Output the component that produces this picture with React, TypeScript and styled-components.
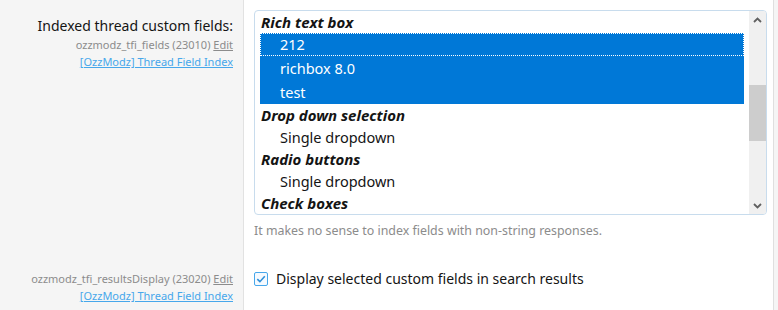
import React from "react";
import styled, { createGlobalStyle } from "styled-components";

const Global = createGlobalStyle`
  html, body { margin: 0; padding: 0; background: #f5f5f5; }
  body { font-family: "Segoe UI", "Noto Sans", sans-serif; color: #141414; }
`;

const Form = styled.div`
  width: 774px;
  border-right: 1px solid #dfdfdf;
  background: #fff;
  box-sizing: border-box;
`;

const Row = styled.div<{ $pt: number; $pb: number }>`
  display: grid;
  grid-template-columns: 244px 1fr;
  & > * { padding-top: ${(p) => p.$pt}px; padding-bottom: ${(p) => p.$pb}px; }
`;

const LabelCol = styled.div<{ $offset: number }>`
  background: #f5f5f5;
  border-right: 1px solid #e2e2e2;
  text-align: right;
  padding-right: 10px;
  padding-top: ${(p) => p.$offset}px !important;
  display: flex;
  flex-direction: column;
  align-items: flex-end;
`;

const MainLabel = styled.div`
  font-size: 14px;
  line-height: 20px;
  color: #141414;
`;

const Meta = styled.div`
  font-size: 11px;
  line-height: 17px;
  color: #8c8c8c;
  white-space: nowrap;
`;

const EditLink = styled.span`
  text-decoration: underline;
  color: #8c8c8c;
`;

const AddonLink = styled.a`
  font-size: 11px;
  line-height: 17px;
  color: #47a7eb;
  text-decoration: underline;
  white-space: nowrap;
`;

const InputCol = styled.div`
  padding-left: 10px;
  padding-right: 6px;
  display: flex;
  flex-direction: column;
`;

const ListBox = styled.div`
  height: 205px;
  border: 1px solid #c8dced;
  border-radius: 4px;
  display: flex;
  background: #fff;
  box-sizing: border-box;
  overflow: hidden;
`;

const Options = styled.div`
  flex: 1;
  padding: 0 5px 0 5px;
  display: flex;
  flex-direction: column;
`;

const Group = styled.div`
  font-size: 15px;
  font-weight: bold;
  font-style: italic;
  height: 22px;
  line-height: 22px;
  padding-left: 1px;
`;

const Option = styled.div<{ $sel?: boolean; $focus?: boolean; $h: number }>`
  font-size: 14.5px;
  height: ${(p) => p.$h}px;
  line-height: ${(p) => p.$h}px;
  padding-left: 20px;
  background: ${(p) => (p.$sel ? "#0078d7" : "transparent")};
  color: ${(p) => (p.$sel ? "#fff" : "#141414")};
  outline: ${(p) => (p.$focus ? "1px dotted #fff" : "none")};
  outline-offset: -1px;
`;

const Scrollbar = styled.div`
  width: 17px;
  background: #f0f0f0;
  display: flex;
  flex-direction: column;
`;

const Arrow = styled.div`
  height: 17px;
  display: flex;
  align-items: center;
  justify-content: center;
`;

const Track = styled.div`
  flex: 1;
  display: flex;
  flex-direction: column;
`;

const Thumb = styled.div<{ $top: number; $h: number }>`
  margin-top: ${(p) => p.$top}px;
  height: ${(p) => p.$h}px;
  background: #cdcdcd;
`;

const Hint = styled.div`
  margin-top: 7px;
  font-size: 12.4px;
  line-height: 17px;
  color: #8c8c8c;
`;

const Spacer = styled.div<{ $h: number }>`
  height: ${(p) => p.$h}px;
`;

const CheckRow = styled.label`
  display: flex;
  align-items: center;
  gap: 8px;
  font-size: 14px;
  line-height: 20px;
  color: #141414;
`;

const Box = styled.span`
  width: 14px;
  height: 14px;
  display: inline-flex;
`;

const Chevron = ({ up }: { up?: boolean }) => (
  <svg width="9" height="6" viewBox="0 0 9 6">
    <path
      d={up ? "M1 5 L4.5 1.5 L8 5" : "M1 1 L4.5 4.5 L8 1"}
      fill="none"
      stroke="#606060"
      strokeWidth="1.8"
    />
  </svg>
);

export default function App() {
  return (
    <>
      <Global />
      <Form>
        <Row $pt={10} $pb={0}>
          <LabelCol $offset={16}>
            <MainLabel>Indexed thread custom fields:</MainLabel>
            <Meta>
              ozzmodz_tfi_fields (23010) <EditLink>Edit</EditLink>
            </Meta>
            <AddonLink>[OzzModz] Thread Field Index</AddonLink>
          </LabelCol>
          <InputCol>
            <ListBox>
              <Options>
                <Group>Rich text box</Group>
                <Option $sel $focus $h={23}>212</Option>
                <Option $sel $h={24}>richbox 8.0</Option>
                <Option $sel $h={24}>test</Option>
                <Group>Drop down selection</Group>
                <Option $h={22}>Single dropdown</Option>
                <Group>Radio buttons</Group>
                <Option $h={22}>Single dropdown</Option>
                <Group>Check boxes</Group>
              </Options>
              <Scrollbar>
                <Arrow><Chevron up /></Arrow>
                <Track>
                  <Thumb $top={57} $h={56} />
                </Track>
                <Arrow><Chevron /></Arrow>
              </Scrollbar>
            </ListBox>
            <Hint>It makes no sense to index fields with non-string responses.</Hint>
          </InputCol>
        </Row>
        <Row $pt={0} $pb={8}>
          <LabelCol $offset={31}>
            <Meta>
              ozzmodz_tfi_resultsDisplay (23020) <EditLink>Edit</EditLink>
            </Meta>
            <AddonLink>[OzzModz] Thread Field Index</AddonLink>
          </LabelCol>
          <InputCol>
            <Spacer $h={30} />
            <CheckRow>
              <Box>
                <svg width="14" height="14" viewBox="0 0 14 14">
                  <rect x="0.5" y="0.5" width="13" height="13" rx="1.5" fill="#f5faff" stroke="#47a7eb" />
                  <path d="M3.3 7.2 L5.9 9.7 L10.8 4.3" fill="none" stroke="#2f8fd8" strokeWidth="1.6" />
                </svg>
              </Box>
              Display selected custom fields in search results
            </CheckRow>
          </InputCol>
        </Row>
      </Form>
    </>
  );
}
